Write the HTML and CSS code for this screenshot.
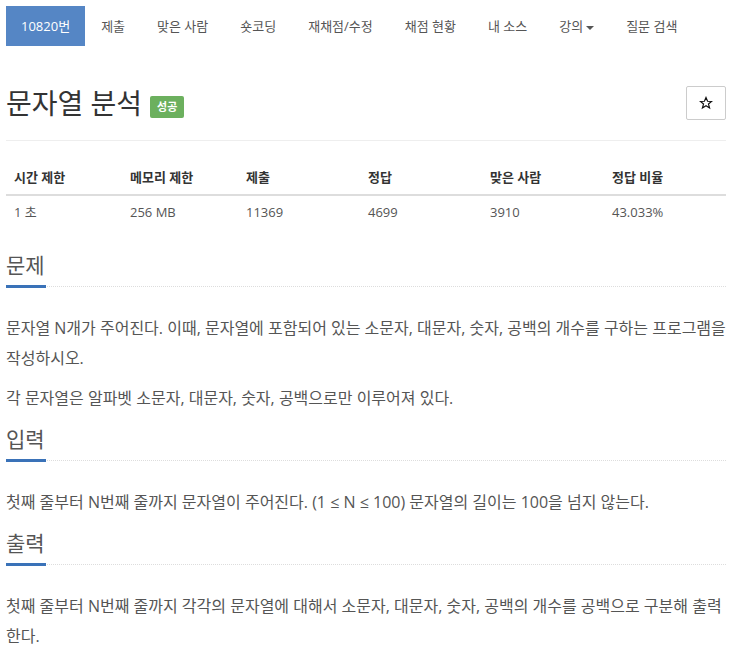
FILE: index.html
```html
<!DOCTYPE html>
<html lang="ko">
<head>
<meta charset="utf-8">
<title>문자열 분석</title>
<link rel="stylesheet" href="styles.css">
</head>
<body>
<div class="wrap">
  <ul class="tabs">
    <li class="tab active">10820번</li>
    <li class="tab">제출</li>
    <li class="tab">맞은 사람</li>
    <li class="tab">숏코딩</li>
    <li class="tab">재채점/수정</li>
    <li class="tab">채점 현황</li>
    <li class="tab">내 소스</li>
    <li class="tab">강의<span class="caret"></span></li>
    <li class="tab">질문 검색</li>
  </ul>

  <div class="page-header">
    <div class="title-group">
      <h1 class="title">문자열 분석</h1>
      <span class="label-success">성공</span>
    </div>
    <button class="star-btn" type="button" aria-label="즐겨찾기">
      <svg class="star-icon" viewBox="0 0 24 24" width="14" height="14" aria-hidden="true">
        <path d="M12 2.5 L14.7 9 L21.6 9.3 L16.2 13.7 L18.1 20.5 L12 16.6 L5.9 20.5 L7.8 13.7 L2.4 9.3 L9.3 9 Z" fill="none" stroke="#111" stroke-width="2" stroke-linejoin="miter"/>
      </svg>
    </button>
  </div>

  <table class="info">
    <thead>
      <tr>
        <th class="narrow">시간 제한</th>
        <th class="narrow">메모리 제한</th>
        <th>제출</th>
        <th>정답</th>
        <th>맞은 사람</th>
        <th>정답 비율</th>
      </tr>
    </thead>
    <tbody>
      <tr>
        <td>1 초</td>
        <td>256 MB</td>
        <td>11369</td>
        <td>4699</td>
        <td>3910</td>
        <td>43.033%</td>
      </tr>
    </tbody>
  </table>

  <section class="section">
    <h2 class="headline"><span>문제</span></h2>
    <div class="text">
      <p>문자열 N개가 주어진다. 이때, 문자열에 포함되어 있는 소문자, 대문자, 숫자, 공백의 개수를 구하는 프로그램을 작성하시오.</p>
      <p>각 문자열은 알파벳 소문자, 대문자, 숫자, 공백으로만 이루어져 있다.</p>
    </div>
  </section>

  <section class="section">
    <h2 class="headline"><span>입력</span></h2>
    <div class="text">
      <p>첫째 줄부터 N번째 줄까지 문자열이 주어진다. (1 ≤ N ≤ 100) 문자열의 길이는 100을 넘지 않는다.</p>
    </div>
  </section>

  <section class="section">
    <h2 class="headline"><span>출력</span></h2>
    <div class="text">
      <p>첫째 줄부터 N번째 줄까지 각각의 문자열에 대해서 소문자, 대문자, 숫자, 공백의 개수를 공백으로 구분해 출력한다.</p>
    </div>
  </section>
</div>
</body>
</html>
```

FILE: styles.css
```css
html, body {
  margin: 0;
  padding: 0;
  background: #fff;
}

body {
  font-family: "Open Sans", "Noto Sans CJK KR", sans-serif;
  color: #333;
  font-size: 13px;
}

.wrap {
  padding: 6px 14px 0 6px;
}

.tabs {
  list-style: none;
  margin: 0;
  padding: 0;
  display: flex;
}

.tab {
  padding: 10px 16px;
  line-height: 20px;
  color: #555;
  font-size: 13px;
}

.tab.active {
  background: #5586c5;
  color: #fff;
  padding: 10px 15px;
}

.caret {
  display: inline-block;
  width: 0;
  height: 0;
  margin-left: 3px;
  vertical-align: middle;
  border-top: 4px solid #555;
  border-left: 4px solid transparent;
  border-right: 4px solid transparent;
}

.page-header {
  margin-top: 40px;
  padding-bottom: 20px;
  border-bottom: 1px solid #eee;
  display: flex;
  justify-content: space-between;
  align-items: center;
}

.title-group {
  display: flex;
  align-items: center;
}

.title {
  margin: 0;
  font-size: 28px;
  font-weight: 400;
  line-height: 34px;
  color: #333;
}

.label-success {
  margin-left: 8px;
  margin-top: 8px;
  background: #6cb05e;
  color: #fff;
  font-size: 11px;
  font-weight: 700;
  line-height: 22px;
  padding: 0 7px;
  border-radius: 2px;
}

.star-btn {
  width: 40px;
  height: 34px;
  border: 1px solid #ccc;
  background: #fff;
  padding: 0;
  border-radius: 2px;
  display: flex;
  align-items: center;
  justify-content: center;
}

.star-icon {
  display: block;
}

.info {
  margin-top: 20px;
  margin-bottom: 20px;
  width: 720px;
  border-collapse: collapse;
  table-layout: fixed;
}

.info th,
.info td {
  padding: 8px;
  line-height: 17px;
  text-align: left;
  width: 106px;
}

.info th.narrow {
  width: 100px;
}

.info th {
  font-weight: 700;
  color: #333;
  border-bottom: 2px solid #ddd;
}

.info td {
  color: #555;
}

.section {
  padding-top: 4px;
}

.headline {
  margin: 0;
  font-size: 21px;
  font-weight: 400;
  line-height: 24px;
  color: #555;
  display: flex;
  border-bottom: 1px dotted #ddd;
}

.headline span {
  padding-bottom: 8px;
  border-bottom: 3px solid #3a72b8;
  margin-bottom: -2px;
  width: 40px;
}

.text {
  padding-top: 26px;
}

.text p {
  margin: 0 0 10px;
  font-size: 16px;
  line-height: 30px;
  color: #555;
}
```
